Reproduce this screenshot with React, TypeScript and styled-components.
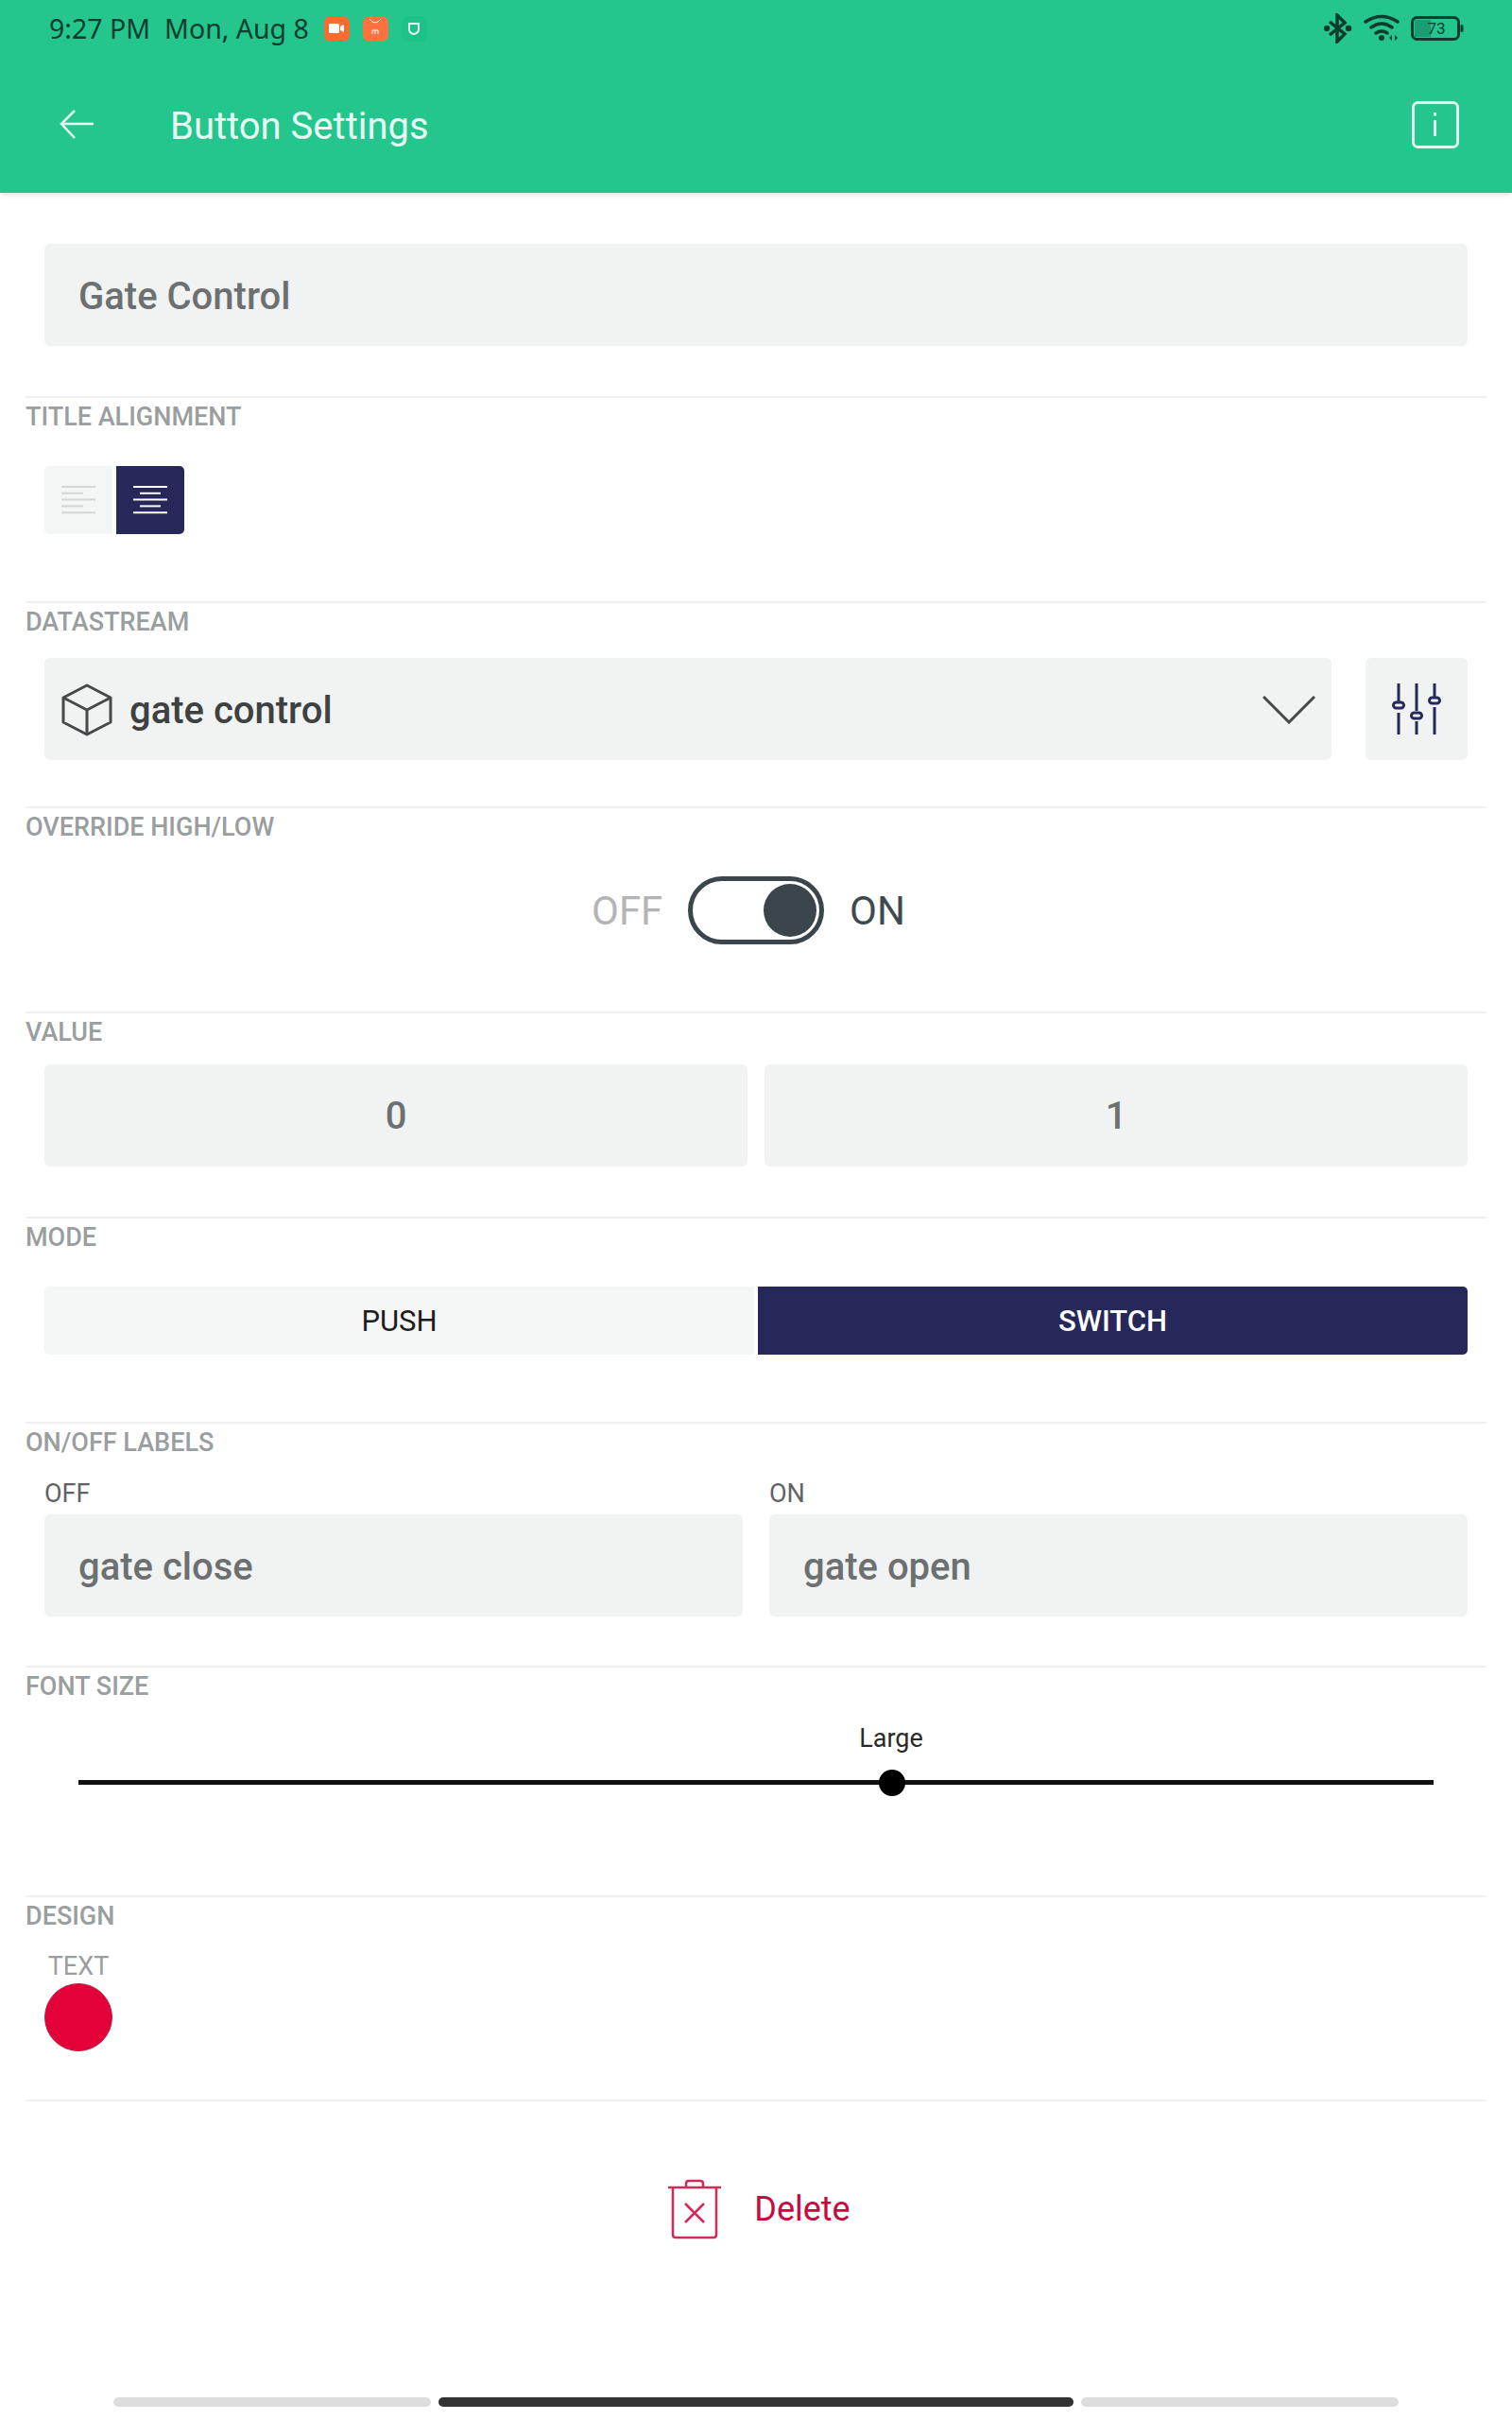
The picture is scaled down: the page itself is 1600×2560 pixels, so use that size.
import React from 'react'
import styled, { createGlobalStyle } from 'styled-components'

const GlobalStyle = createGlobalStyle`
    html, body {
        margin: 0;
        padding: 0;
        background: #fff;
        font-family: Roboto, "Liberation Sans", sans-serif;
    }
    * {
        box-sizing: border-box;
    }
`

const Page = styled.div`
    position: relative;
    width: 1600px;
    height: 2560px;
    overflow: hidden;
    background: #fff;
`

const Header = styled.header`
    height: 204px;
    background: #25c58e;
    box-shadow: 0 2px 6px rgba(0, 0, 0, 0.12);
`

const StatusBar = styled.div`
    height: 60px;
    padding: 0 51px 0 52px;
    display: flex;
    align-items: center;
    justify-content: space-between;
    color: #0b3d2e;
`

const StatusLeft = styled.div`
    display: flex;
    align-items: center;
`

const StatusText = styled.span`
    font-family: "Noto Sans", sans-serif;
    font-size: 28.5px;
    margin-right: ${props => props.$gap}px;
    white-space: pre;
`

const AppBadge = styled.div`
    width: 27px;
    height: 27px;
    border-radius: 7px;
    background: ${props => props.$bg};
    margin-right: 14px;
    display: flex;
    align-items: center;
    justify-content: center;
`

const StatusRight = styled.div`
    display: flex;
    align-items: center;
    gap: 12px;
`

const TitleBar = styled.div`
    height: 144px;
    padding: 0 56px 0 63px;
    display: flex;
    align-items: center;
    color: #e6fbf3;
`

const Title = styled.h1`
    margin: 2px 0 0 81px;
    flex: 1;
    font-size: 40px;
    font-weight: 400;
`

const TitleField = styled.div`
    padding: 54px 47px 53px;
`

const Section = styled.section`
    margin: 0 27px;
    border-top: 2px solid #eff0f0;
    height: ${props => props.$h}px;
`

const SectionLabel = styled.div`
    height: 34px;
    margin-top: 3px;
    line-height: 34px;
    color: #9a9e9f;
    font-size: 27px;
    font-weight: 500;
`

const Body = styled.div`
    padding: ${props => props.$top}px 20px 0;
`

const Input = styled.div`
    height: 108px;
    flex: 1;
    background: #f1f3f3;
    border-radius: 6px;
    display: flex;
    align-items: center;
    justify-content: ${props => props.$center ? 'center' : 'flex-start'};
    padding: ${props => props.$center ? '0' : '2px 36px 0'};
    color: #6c7071;
    font-size: 40px;
    font-weight: 500;
`

const AlignGroup = styled.div`
    display: flex;
    gap: 4px;
`

const AlignButton = styled.div`
    width: 72px;
    height: 72px;
    display: flex;
    align-items: center;
    justify-content: center;
    background: ${props => props.$active ? '#27285a' : '#f4f5f5'};
    border-radius: ${props => props.$active ? '0 5px 5px 0' : '5px 0 0 5px'};
`

const Row = styled.div`
    display: flex;
    gap: ${props => props.$gap}px;
`

const Select = styled.div`
    flex: 1;
    height: 108px;
    background: #f1f3f3;
    border-radius: 6px;
    display: flex;
    align-items: center;
    padding: 2px 17px 0 18px;
    color: #3d4142;
    font-size: 40px;
    font-weight: 500;
`

const SelectText = styled.span`
    flex: 1;
    margin-left: 18px;
`

const IconButton = styled.div`
    width: 108px;
    height: 108px;
    background: #f1f3f3;
    border-radius: 6px;
    display: flex;
    align-items: center;
    justify-content: center;
`

const ToggleRow = styled.div`
    display: flex;
    justify-content: center;
    align-items: center;
    gap: 28px;
    font-size: 42px;
    padding-top: 35px;
`

const ToggleText = styled.span`
    color: ${props => props.$on ? '#3f4a50' : '#b4b4b4'};
    font-weight: 400;
    width: 75px;
    text-align: ${props => props.$on ? 'left' : 'right'};
    position: relative;
    left: ${props => props.$on ? -1 : 1}px;
`

const Toggle = styled.div`
    width: 144px;
    height: 72px;
    border: 5px solid #3a454c;
    border-radius: 36px;
    position: relative;
`

const ToggleKnob = styled.div`
    position: absolute;
    top: 3px;
    right: 3px;
    width: 56px;
    height: 56px;
    border-radius: 50%;
    background: #3a454c;
`

const ModeButton = styled.div`
    flex: 1;
    height: 72px;
    display: flex;
    align-items: center;
    justify-content: center;
    font-size: 31px;
    background: ${props => props.$active ? '#27285a' : '#f4f5f5'};
    color: ${props => props.$active ? '#fff' : '#1c1c1c'};
    font-weight: ${props => props.$active ? 500 : 400};
    border-radius: ${props => props.$active ? '0 5px 5px 0' : '5px 0 0 5px'};
`

const LabelColumn = styled.div`
    flex: 1;
`

const SmallLabel = styled.div`
    height: 30px;
    line-height: 30px;
    font-size: 27px;
    color: #5f6364;
    margin-bottom: 7px;
`

const SliderWrap = styled.div`
    position: relative;
    height: 70px;
    margin: 0 36px;
`

const SliderValue = styled.div`
    position: absolute;
    left: 860px;
    top: -9px;
    width: 0;
    display: flex;
    justify-content: center;
    white-space: nowrap;
    font-size: 27px;
    color: #2a2a2a;
`

const SliderTrack = styled.div`
    position: absolute;
    left: 0;
    right: 0;
    top: 51px;
    height: 5px;
    background: #111;
`

const SliderThumb = styled.div`
    position: absolute;
    left: 847px;
    top: 40px;
    width: 28px;
    height: 28px;
    border-radius: 50%;
    background: #000;
`

const ColorItem = styled.div`
    display: inline-flex;
    flex-direction: column;
    align-items: center;
    color: #9a9e9f;
    font-size: 27px;
`

const ColorDot = styled.div`
    width: 72px;
    height: 72px;
    border-radius: 50%;
    background: #e40038;
    border: 1px solid #b42148;
    margin-top: 2px;
`

const DeleteRow = styled.div`
    height: 228px;
    padding-left: 6px;
    display: flex;
    align-items: center;
    justify-content: center;
    gap: 34px;
    color: #c70a3f;
    font-size: 36px;
`

const Pager = styled.div`
    position: absolute;
    left: 120px;
    top: 2536px;
    display: flex;
    gap: 8px;
`

const PagerBar = styled.div`
    width: ${props => props.$w}px;
    height: 10px;
    border-radius: 5px;
    background: ${props => props.$active ? '#333' : '#ddd'};
`

const AlignIcon = ({ center, color }) => {
    const rows = [0, 1, 2, 3, 4]
    return (
        <svg width="36" height="30" viewBox="0 0 36 30">
            {rows.map(i => {
                const short = i % 2 === 1
                const x1 = center && short ? 7 : 0
                const x2 = short ? (center ? 29 : 23) : 36
                return <line key={i} x1={x1} x2={x2} y1={1 + i * 6.8} y2={1 + i * 6.8} stroke={color} strokeWidth="2" />
            })}
        </svg>
    )
}

const CubeIcon = () => (
    <svg width="54" height="56" viewBox="0 0 54 56" fill="none" stroke="#45494a" strokeWidth="3" strokeLinejoin="round">
        <path d="M27 2 L52 15 V41 L27 54 L2 41 V15 Z" />
        <path d="M2 15 L27 28 L52 15 M27 28 V54" />
    </svg>
)

const ChevronIcon = () => (
    <svg width="56" height="30" viewBox="0 0 56 30" fill="none" stroke="#45494a" strokeWidth="3">
        <path d="M1 1 L28 28 L55 1" />
    </svg>
)

const SlidersIcon = () => (
    <svg width="52" height="54" viewBox="0 0 52 54" fill="none" stroke="#27285a" strokeWidth="3">
        <path d="M7 0 V20 M7 31 V54 M26 0 V29 M26 40 V54 M45 0 V14 M45 25 V54" />
        <rect x="1.5" y="20" width="11" height="6" rx="3" />
        <rect x="20.5" y="31" width="11" height="6" rx="3" />
        <rect x="39.5" y="15" width="11" height="6" rx="3" />
    </svg>
)

const BackIcon = () => (
    <svg width="36" height="32" viewBox="0 0 36 32" fill="none" stroke="#e6fbf3" strokeWidth="2.5">
        <path d="M36 15 H2 M16 1 L2 15 L16 30" />
    </svg>
)

const InfoIcon = () => (
    <svg width="50" height="50" viewBox="0 0 50 50" fill="none" stroke="#dffaf0" strokeWidth="3">
        <rect x="1.5" y="1.5" width="47" height="47" rx="5" />
        <path d="M24.5 20 V37 M24.5 12 V15.5" />
    </svg>
)

const TrashIcon = () => (
    <svg width="58" height="64" viewBox="0 0 58 64" fill="none" stroke="#d42a58" strokeWidth="2.5" strokeLinejoin="round">
        <path d="M1 9 H57 M6 9 V59 Q6 62 9 62 H49 Q52 62 52 59 V9 M20 9 V5 Q20 2 23 2 H35 Q38 2 38 5 V9 M19 26 L39 46 M39 26 L19 46" />
    </svg>
)

const BluetoothIcon = () => (
    <svg width="30" height="32" viewBox="0 0 30 32" fill="none" stroke="#0b3d2e" strokeWidth="3.5">
        <path d="M6 9 L22 22 L14 30 V2 L22 10 L6 23" />
        <circle cx="3" cy="16" r="1.5" fill="#0b3d2e" />
        <circle cx="26" cy="16" r="1.5" fill="#0b3d2e" />
    </svg>
)

const WifiIcon = () => (
    <svg width="38" height="30" viewBox="0 0 38 30" fill="none" stroke="#0b3d2e" strokeWidth="3.5" strokeLinecap="round">
        <path d="M2 8 Q19 -3 36 8 M8 14 Q19 6 30 14 M13 20 Q19 16 25 20" />
        <circle cx="19" cy="25" r="3" fill="#0b3d2e" stroke="none" />
        <path d="M30 22 L27 25 L30 28 Z M33 22 L36 25 L33 28 Z" fill="#0b3d2e" stroke="none" />
    </svg>
)

const BatteryIcon = () => (
    <svg width="56" height="26" viewBox="0 0 56 26">
        <rect x="1.5" y="1.5" width="49" height="23" rx="5" fill="none" stroke="#0b3d2e" strokeWidth="3" />
        <rect x="4" y="4" width="17" height="18" fill="#1b9c72" />
        <rect x="52.5" y="9" width="3" height="8" rx="1.5" fill="#0b3d2e" />
        <text x="27" y="19" textAnchor="middle" fontFamily="Roboto, sans-serif" fontSize="17" fill="#0b3d2e">73</text>
    </svg>
)

const CameraGlyph = () => (
    <svg width="16" height="10" viewBox="0 0 16 10" fill="#fff">
        <rect x="0" y="0" width="11" height="10" rx="1" />
        <path d="M12 3 L16 1 V9 L12 7 Z" />
    </svg>
)

const ShopGlyph = () => (
    <svg width="16" height="22" viewBox="0 0 16 22" fill="none" stroke="#fff" strokeWidth="1">
        <path d="M2 1 Q8 9 14 1" />
        <path d="M5 17 V13 H11 V17 M8 13 V17" />
    </svg>
)

const ShieldGlyph = () => (
    <svg width="14" height="14" viewBox="0 0 14 14" fill="none" stroke="#e6fbf3" strokeWidth="2">
        <path d="M2 2 H12 V8 Q12 12 7 13 Q2 12 2 8 Z" />
    </svg>
)

const App = () => (
    <Page>
        <GlobalStyle />
        <Header>
            <StatusBar>
                <StatusLeft>
                    <StatusText $gap={15}>9:27 PM</StatusText>
                    <StatusText $gap={16}>Mon, Aug 8</StatusText>
                    <AppBadge $bg="#ff6a2e"><CameraGlyph /></AppBadge>
                    <AppBadge $bg="#ff7240"><ShopGlyph /></AppBadge>
                    <AppBadge $bg="#1cc286"><ShieldGlyph /></AppBadge>
                </StatusLeft>
                <StatusRight>
                    <BluetoothIcon />
                    <WifiIcon />
                    <BatteryIcon />
                </StatusRight>
            </StatusBar>
            <TitleBar>
                <BackIcon />
                <Title>Button Settings</Title>
                <InfoIcon />
            </TitleBar>
        </Header>
        <TitleField>
            <Input>Gate Control</Input>
        </TitleField>
        <Section $h={217}>
            <SectionLabel>TITLE ALIGNMENT</SectionLabel>
            <Body $top={35}>
                <AlignGroup>
                    <AlignButton><AlignIcon color="#d4d5d6" /></AlignButton>
                    <AlignButton $active><AlignIcon center color="#fff" /></AlignButton>
                </AlignGroup>
            </Body>
        </Section>
        <Section $h={217}>
            <SectionLabel>DATASTREAM</SectionLabel>
            <Body $top={21}>
                <Row $gap={36}>
                    <Select>
                        <CubeIcon />
                        <SelectText>gate control</SelectText>
                        <ChevronIcon />
                    </Select>
                    <IconButton><SlidersIcon /></IconButton>
                </Row>
            </Body>
        </Section>
        <Section $h={217}>
            <SectionLabel>OVERRIDE HIGH/LOW</SectionLabel>
            <ToggleRow>
                <ToggleText>OFF</ToggleText>
                <Toggle><ToggleKnob /></Toggle>
                <ToggleText $on>ON</ToggleText>
            </ToggleRow>
        </Section>
        <Section $h={217}>
            <SectionLabel>VALUE</SectionLabel>
            <Body $top={17}>
                <Row $gap={18}>
                    <Input $center>0</Input>
                    <Input $center>1</Input>
                </Row>
            </Body>
        </Section>
        <Section $h={217}>
            <SectionLabel>MODE</SectionLabel>
            <Body $top={35}>
                <Row $gap={4}>
                    <ModeButton>PUSH</ModeButton>
                    <ModeButton $active>SWITCH</ModeButton>
                </Row>
            </Body>
        </Section>
        <Section $h={258}>
            <SectionLabel>ON/OFF LABELS</SectionLabel>
            <Body $top={22}>
                <Row $gap={28}>
                    <LabelColumn>
                        <SmallLabel>OFF</SmallLabel>
                        <Input>gate close</Input>
                    </LabelColumn>
                    <LabelColumn>
                        <SmallLabel>ON</SmallLabel>
                        <Input>gate open</Input>
                    </LabelColumn>
                </Row>
            </Body>
        </Section>
        <Section $h={243}>
            <SectionLabel>FONT SIZE</SectionLabel>
            <Body $top={31}>
                <SliderWrap>
                    <SliderValue>Large</SliderValue>
                    <SliderTrack />
                    <SliderThumb />
                </SliderWrap>
            </Body>
        </Section>
        <Section $h={216}>
            <SectionLabel>DESIGN</SectionLabel>
            <Body $top={20}>
                <ColorItem>
                    TEXT
                    <ColorDot />
                </ColorItem>
            </Body>
        </Section>
        <Section $h={230}>
            <DeleteRow>
                <TrashIcon />
                Delete
            </DeleteRow>
        </Section>
        <Pager>
            <PagerBar $w={336} />
            <PagerBar $w={672} $active />
            <PagerBar $w={336} />
        </Pager>
    </Page>
)

export default App
